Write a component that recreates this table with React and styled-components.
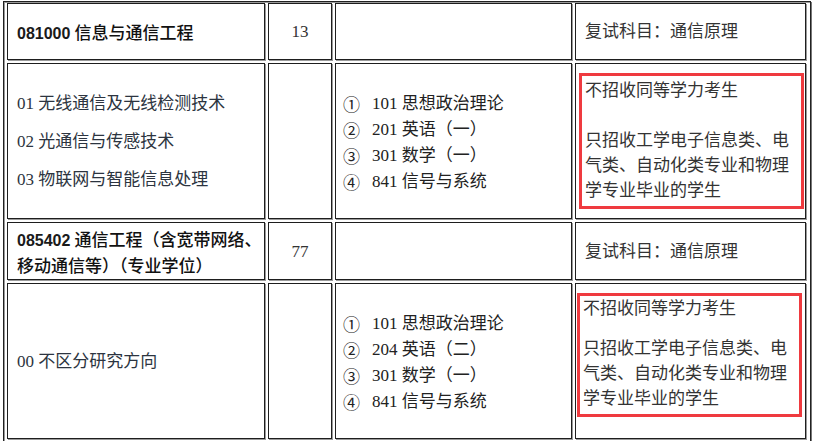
import React from 'react';
import styled, { createGlobalStyle } from 'styled-components';

const GlobalStyle = createGlobalStyle`
	html, body {
		margin: 0;
		padding: 0;
		background: #fff;
	}
	body {
		font-family: "Liberation Serif", "Noto Sans CJK SC", serif;
		font-size: 17px;
		color: #333;
	}
`;

const Page = styled.div`
	padding: 1px 0 0 3px;
	width: 824px;
	height: 441px;
	box-sizing: border-box;
	overflow: hidden;
`;

const Table = styled.div`
	width: 808px;
	box-sizing: border-box;
	display: grid;
	grid-template-columns: 258px 64px 237px 231px;
	grid-template-rows: 57px 156px 58px 156px;
	gap: 3px;
	padding: 1px 2px 4px 3px;
	border: 1px solid #222;
	box-shadow: inset 1px 1px 0 #9a9a9a, 1px 1px 0 #777;
`;

const Cell = styled.div`
	box-sizing: border-box;
	border: 1px solid #1e1e1e;
	box-shadow: 1px 1px 0 #9a9a9a;
	display: flex;
	align-items: ${({ $top }) => ($top ? 'flex-start' : 'center')};
	justify-content: ${({ $center }) => ($center ? 'center' : 'flex-start')};
	padding: ${({ $pad }) => $pad || '0 9px'};
	line-height: 25px;
`;

const Heading = styled.div`
	font-family: "Noto Sans CJK SC", sans-serif;
	font-weight: 500;
	color: #111;
	white-space: nowrap;
	line-height: 24px;
	padding-top: 2px;
`;

const Code = styled.span`
	font-family: "Liberation Sans", sans-serif;
	font-size: 16px;
	font-weight: 700;
	color: #1a1a1a;
	margin-right: 4px;
`;

const Count = styled.span`
	color: #333;
`;

const DirectionList = styled.div`
	display: flex;
	flex-direction: column;
	gap: 13px;
	color: #2c3440;
	white-space: nowrap;
`;

const ExamList = styled.div`
	display: flex;
	flex-direction: column;
	color: #222;
	white-space: nowrap;
	padding-top: 3px;
`;

const ExamLine = styled.div`
	display: flex;
	align-items: center;
	height: 26px;
	line-height: 26px;
`;

const Circled = styled.span`
	font-family: "Noto Sans CJK SC", sans-serif;
	width: 17px;
	text-align: center;
	margin-right: 12px;
`;

const Note = styled.div`
	color: #333;
	white-space: nowrap;
`;

const RedBox = styled.div`
	box-sizing: border-box;
	width: 225px;
	margin: 9px 0 0 ${({ $shift }) => $shift || '3px'};
	border: 3px solid #ef3a3f;
	padding: ${({ $pad }) => $pad || '2px 3px 3px'};
	color: #333;
	p {
		margin: 0;
	}
	p + p {
		margin-top: ${({ $gap }) => $gap || '25px'};
	}
`;

const exams = (english) => [
	['①', '101 思想政治理论'],
	['②', english],
	['③', '301 数学（一）'],
	['④', '841 信号与系统'],
];

const ExamCell = ({ english }) => (
	<Cell $pad="0 7px">
		<ExamList>
			{exams(english).map(([mark, text]) => (
				<ExamLine key={mark}>
					<Circled>{mark}</Circled>
					{text}
				</ExamLine>
			))}
		</ExamList>
	</Cell>
);

const App = () => (
	<>
		<GlobalStyle />
		<Page>
			<Table>
				<Cell>
					<Heading>
						<Code>081000</Code>信息与通信工程
					</Heading>
				</Cell>
				<Cell $center>
					<Count>13</Count>
				</Cell>
				<Cell />
				<Cell>
					<Note>复试科目：通信原理</Note>
				</Cell>

				<Cell>
					<DirectionList>
						<span>01 无线通信及无线检测技术</span>
						<span>02 光通信与传感技术</span>
						<span>03 物联网与智能信息处理</span>
					</DirectionList>
				</Cell>
				<Cell />
				<ExamCell english="201 英语（一）" />
				<Cell $top $pad="0">
					<RedBox>
						<p>不招收同等学力考生</p>
						<p>只招收工学电子信息类、电气类、自动化类专业和物理学专业毕业的学生</p>
					</RedBox>
				</Cell>

				<Cell>
					<Heading>
						<Code>085402</Code>通信工程（含宽带网络、
						<br />
						移动通信等）（专业学位）
					</Heading>
				</Cell>
				<Cell $center>
					<Count>77</Count>
				</Cell>
				<Cell />
				<Cell>
					<Note>复试科目：通信原理</Note>
				</Cell>

				<Cell>
					<DirectionList>
						<span>00 不区分研究方向</span>
					</DirectionList>
				</Cell>
				<Cell />
				<ExamCell english="204 英语（二）" />
				<Cell $top $pad="0">
					<RedBox $shift="1px" $pad="0 3px 3px" $gap="15px">
						<p>不招收同等学力考生</p>
						<p>只招收工学电子信息类、电气类、自动化类专业和物理学专业毕业的学生</p>
					</RedBox>
				</Cell>
			</Table>
		</Page>
	</>
);

export default App;
